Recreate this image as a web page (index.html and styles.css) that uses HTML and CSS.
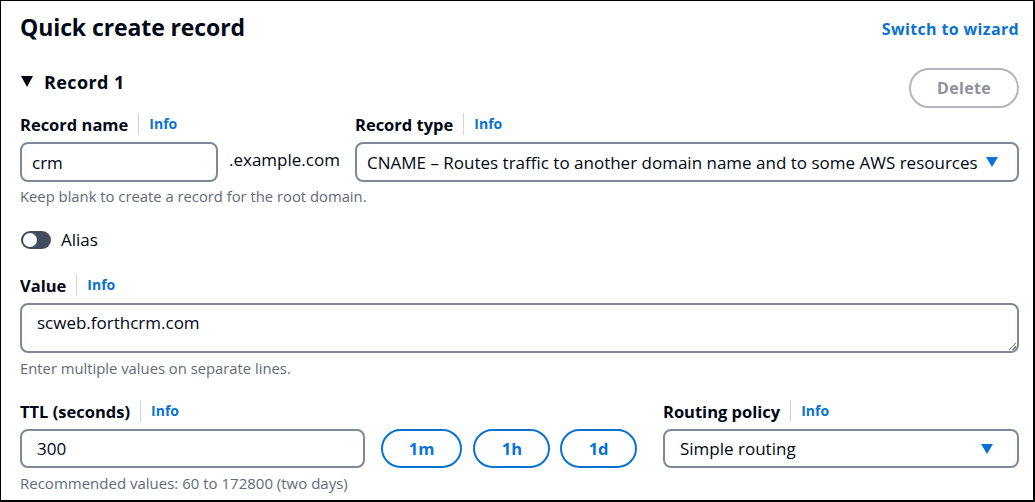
FILE: index.html
```html
<!DOCTYPE html>
<html lang="en">
<head>
  <meta charset="UTF-8" />
  <title>Quick create record</title>
  <link rel="stylesheet" href="styles.css">
</head>
<body>
  <div class="frame">
    <div class="header">
      <h1>Quick create record</h1>
      <a href="#" class="link">Switch to wizard</a>
    </div>

    <div class="record-head">
      <div class="record-title"><span class="caret"></span>Record 1</div>
      <button class="btn-delete" disabled>Delete</button>
    </div>

    <div class="row-name">
      <div class="field field-name">
        <div class="label">Record name <span class="info">Info</span></div>
        <input class="input" type="text" value="crm">
      </div>
      <div class="suffix">.example.com</div>
      <div class="field field-type">
        <div class="label">Record type <span class="info">Info</span></div>
        <div class="select">
          <span>CNAME – Routes traffic to another domain name and to some AWS resources</span>
          <span class="arrow"></span>
        </div>
      </div>
    </div>
    <p class="hint">Keep blank to create a record for the root domain.</p>

    <div class="toggle-row">
      <span class="toggle"><span class="knob"></span></span>
      <span>Alias</span>
    </div>

    <div class="field field-value">
      <div class="label">Value <span class="info">Info</span></div>
      <div class="textarea">scweb.forthcrm.com<span class="grip"></span></div>
      <p class="hint">Enter multiple values on separate lines.</p>
    </div>

    <div class="row-ttl">
      <div class="field field-ttl">
        <div class="label">TTL (seconds) <span class="info">Info</span></div>
        <div class="ttl-line">
          <input class="input ttl-input" type="text" value="300">
          <button class="btn-ttl btn-wide">1m</button>
          <button class="btn-ttl">1h</button>
          <button class="btn-ttl">1d</button>
        </div>
        <p class="hint">Recommended values: 60 to 172800 (two days)</p>
      </div>
      <div class="field field-routing">
        <div class="label">Routing policy <span class="info">Info</span></div>
        <div class="select">
          <span>Simple routing</span>
          <span class="arrow"></span>
        </div>
      </div>
    </div>
  </div>
</body>
</html>
```

FILE: styles.css
```css
html {
  box-sizing: border-box;
}
*, *:before, *:after {
  box-sizing: inherit;
}

body {
  margin: 0;
  font-family: 'Open Sans', 'Noto Sans', Arial, sans-serif;
  color: #000716;
  background: white;
}

.frame {
  width: 1035px;
  height: 502px;
  border: 1px solid #000;
  border-right-width: 2px;
  border-bottom-width: 2px;
  padding: 11px 14px 0 19px;
  overflow: hidden;
}

.header {
  display: flex;
  justify-content: space-between;
  align-items: center;
  height: 30px;
}

h1 {
  margin: 0;
  font-size: 23px;
  font-weight: 700;
  letter-spacing: -0.1px;
}

.link {
  color: #0972d3;
  font-weight: 700;
  font-size: 16px;
  letter-spacing: 0.35px;
  text-decoration: none;
  margin-top: 3px;
}

.record-head {
  display: flex;
  justify-content: space-between;
  margin-top: 27px;
  height: 40px;
}

.record-title {
  display: flex;
  align-items: center;
  height: 25px;
  font-size: 18px;
  font-weight: 700;
  letter-spacing: 0.4px;
}

.caret {
  width: 0;
  height: 0;
  border-left: 6.5px solid transparent;
  border-right: 6.5px solid transparent;
  border-top: 11px solid #000716;
  margin: 0 11px 0 1px;
}

.btn-delete {
  width: 110px;
  height: 40px;
  margin-top: -1px;
  border: 2px solid #b4b4bb;
  border-radius: 20px;
  background: white;
  color: #8d9199;
  font: inherit;
  font-weight: 700;
  font-size: 16px;
  letter-spacing: 0.3px;
}

.label {
  font-size: 16.5px;
  font-weight: 700;
  height: 22px;
  line-height: 21px;
  margin-bottom: 7px;
  display: flex;
  align-items: center;
  white-space: nowrap;
}

.info {
  color: #0972d3;
  font-size: 14px;
  border-left: 1px solid #d1d5db;
  margin-left: 10px;
  padding-left: 10px;
  line-height: 22px;
}

.row-name {
  display: flex;
  align-items: flex-end;
  margin-top: 4px;
}

.field-name {
  width: 198px;
}

.suffix {
  font-size: 17px;
  height: 40px;
  line-height: 35px;
  width: 113px;
  margin: 0 13px 0 11px;
  white-space: nowrap;
}

.field-type {
  flex: 1;
}

.input, .select, .textarea {
  display: block;
  width: 100%;
  height: 40px;
  border: 2px solid #7d8998;
  border-radius: 8px;
  padding: 0 10px;
  font: inherit;
  font-size: 17px;
  color: #000716;
  background: white;
}

.select {
  display: flex;
  align-items: center;
  justify-content: space-between;
  white-space: nowrap;
}

.arrow {
  width: 0;
  height: 0;
  border-left: 6px solid transparent;
  border-right: 6px solid transparent;
  border-top: 10px solid #0972d3;
  margin-right: 9px;
}

.hint {
  margin: 5px 0 0;
  font-size: 14.8px;
  line-height: 18px;
  color: #5f6b7a;
}

.toggle-row {
  display: flex;
  align-items: center;
  gap: 10px;
  margin-top: 23px;
  font-size: 17px;
}

.toggle {
  width: 30px;
  height: 18px;
  border-radius: 9px;
  background: #414d5c;
  padding: 2px;
  margin-left: 1px;
  display: flex;
}

.knob {
  width: 14px;
  height: 14px;
  border-radius: 50%;
  background: white;
}

.field-value {
  margin-top: 23px;
}

.textarea {
  height: 50px;
  padding: 6px 15px;
  position: relative;
}

.field-value .hint {
  margin-top: 6px;
}

.grip {
  position: absolute;
  right: 1px;
  bottom: 1px;
  width: 7px;
  height: 7px;
  background: linear-gradient(135deg, transparent 45%, #777 45%, #777 55%, transparent 55%, transparent 70%, #777 70%, #777 80%, transparent 80%);
}

.row-ttl {
  display: flex;
  gap: 26px;
  margin-top: 23px;
}

.field-ttl {
  width: 617px;
}

.field-routing {
  flex: 1;
}

.ttl-line {
  display: flex;
  gap: 10px;
}

.ttl-input {
  width: 346px;
  height: 39px;
  padding: 0 15px;
  margin-right: 6px;
}

.field-routing .select {
  height: 39px;
  padding: 0 15px;
}

.btn-ttl {
  width: 77px;
  height: 39px;
  border: 2px solid #0972d3;
  border-radius: 20px;
  background: white;
  color: #0972d3;
  font: inherit;
  font-weight: 700;
  font-size: 16.5px;
}
.btn-wide {
  width: 82px;
  margin-right: 1px;
}

.row-ttl .hint {
  font-size: 15px;
  margin-top: 6px;
}
```
